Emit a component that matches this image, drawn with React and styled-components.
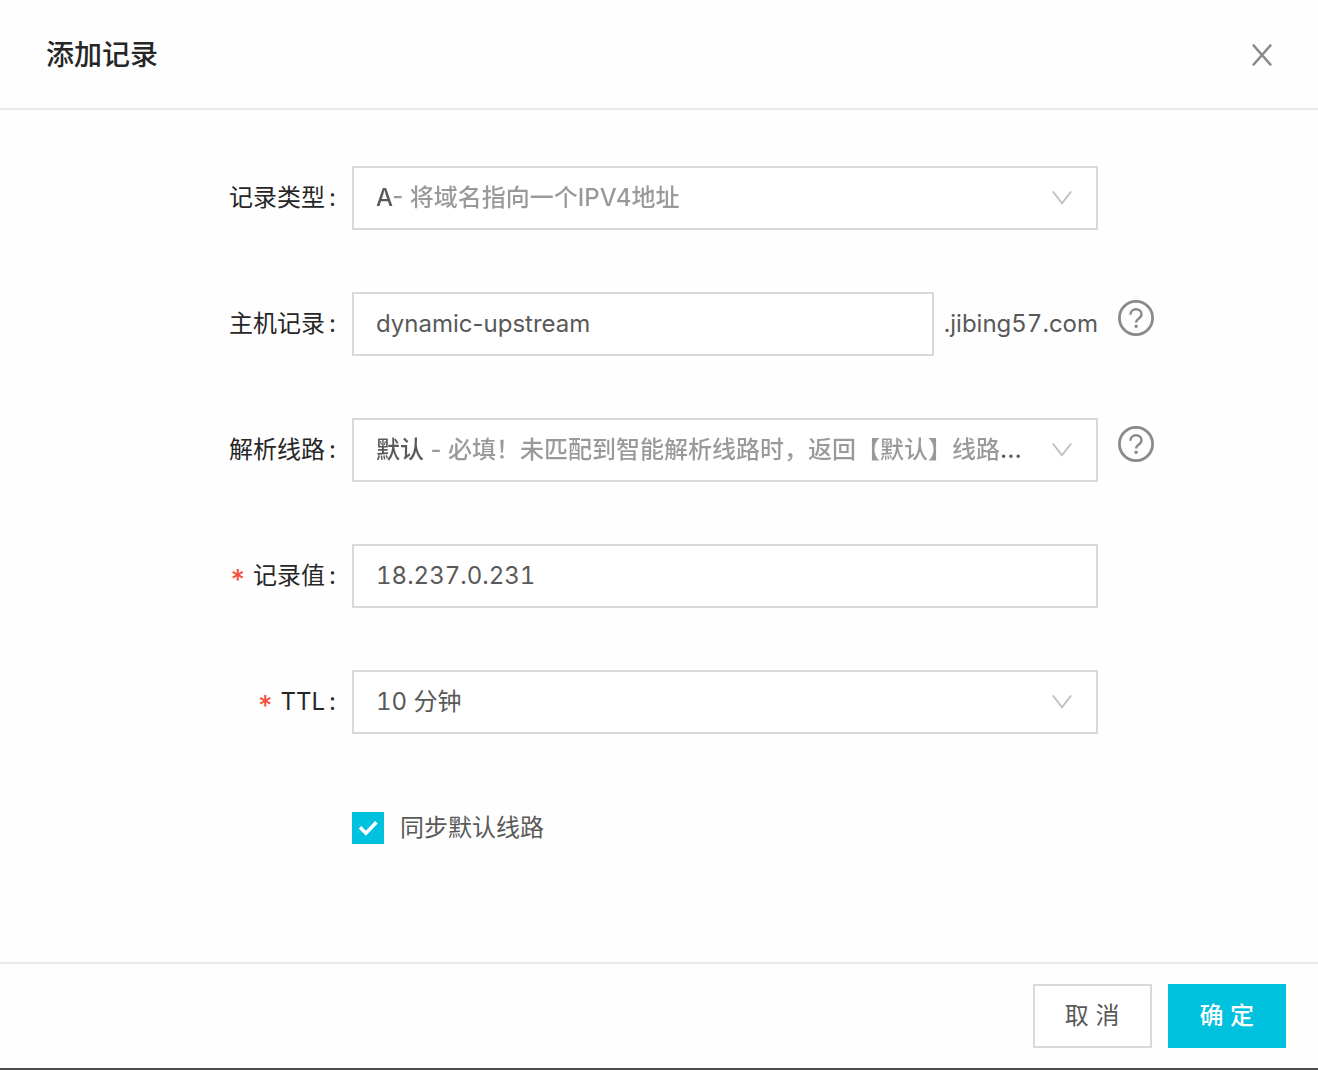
import React from "react";
import styled, { createGlobalStyle, css } from "styled-components";

const GlobalStyle = createGlobalStyle`
  *, *::before, *::after { box-sizing: border-box; }
  body {
    margin: 0;
    background: #fefefe;
    color: #595959;
    font-family: Inter, "Noto Sans CJK SC", sans-serif;
    font-size: 24px;
    line-height: 36px;
  }
  button, input, select { font: inherit; color: inherit; margin: 0; }
`;

const Dialog = styled.section`
  display: flex;
  flex-direction: column;
  min-height: 100vh;
  background: #fefefe;
  border-bottom: 2px solid #4d4d4f;
`;

const Header = styled.header`
  display: flex;
  align-items: center;
  justify-content: space-between;
  padding: 33px 46px 31px;
  border-bottom: 2px solid #e8eaea;
`;

const Title = styled.h1`
  margin: 0;
  color: #262626;
  font-size: 28px;
  font-weight: 500;
  line-height: 44px;
`;

const CloseButton = styled.button`
  display: flex;
  padding: 0;
  border: 0;
  background: none;
  color: #8a8a8a;
  cursor: pointer;
`;

const Form = styled.form`
  display: flex;
  flex: 1;
  flex-direction: column;
`;

const Fields = styled.div`
  display: flex;
  flex: 1;
  flex-direction: column;
  gap: 62px;
  padding: 56px 0 102px;
`;

const Row = styled.div`
  display: grid;
  grid-template-columns: 336px minmax(0, 1fr) 200px;
  column-gap: 16px;
  min-height: 64px;
`;

const Label = styled.label`
  display: flex;
  align-items: center;
  justify-content: flex-end;
  color: #262626;
`;

const Required = styled.span`
  margin-right: 8px;
  padding-top: 8px;
  color: #f5503f;
  font-size: 28px;
  font-weight: 500;
`;

const Colon = styled.span`
  margin-left: 4px;
`;

const Control = styled.div`
  grid-column: 2;
  display: flex;
  align-items: center;
  gap: 10px;
  margin-right: 4px;
`;

const frame = css`
  flex: 1;
  min-width: 0;
  height: 64px;
  border: 2px solid #d9d9d9;
  background: #fff;
`;

const TextInput = styled.input`
  ${frame}
  padding: 0 22px 2px;
  border-radius: 0;
  outline: none;
  font-variant-numeric: ${({ $numeric }) => ($numeric ? "tabular-nums" : "normal")};
`;

const Suffix = styled.span`
  font-variant-numeric: tabular-nums;
`;

const SelectFrame = styled.div`
  ${frame}
  display: grid;
  grid-template-columns: minmax(0, 1fr) 60px;
  align-items: center;
`;

const NativeSelect = styled.select`
  grid-area: 1 / 1 / 2 / 3;
  width: 100%;
  height: 60px;
  padding: 0 70px 0 22px;
  border: 0;
  border-radius: 0;
  outline: none;
  appearance: none;
  background: none;
  text-overflow: ellipsis;
  font-variant-numeric: tabular-nums;
  cursor: pointer;
  ${({ $lead }) =>
    $lead &&
    css`
      font-variant-numeric: normal;
      font-weight: 500;
      color: transparent;
      background: linear-gradient(
        to right,
        #595959 ${$lead}px,
        #999 ${$lead}px,
        #999 calc(100% - 95px),
        #595959 calc(100% - 95px)
      );
      background-clip: text;
      -webkit-background-clip: text;
      option { color: #595959; }
    `}
`;

const Chevron = styled.svg`
  grid-area: 1 / 2;
  margin-left: 16px;
  pointer-events: none;
`;

const HelpButton = styled.button`
  align-self: start;
  justify-self: start;
  display: flex;
  margin-top: 8px;
  padding: 0;
  border: 0;
  background: none;
  color: #8a8a8a;
  cursor: pointer;
`;

const CheckLabel = styled.label`
  display: flex;
  align-items: center;
  gap: 16px;
  cursor: pointer;
`;

const CheckSlot = styled.span`
  display: grid;
  place-items: center;
  & > * { grid-area: 1 / 1; }
`;

const Checkbox = styled.input`
  width: 32px;
  height: 32px;
  margin: 0;
  appearance: none;
  border: 2px solid #d9d9d9;
  background: #fff;
  &:checked { border-color: #00c1de; background: #00c1de; }
`;

const Tick = styled.svg`
  pointer-events: none;
`;

const Footer = styled.footer`
  display: flex;
  justify-content: flex-end;
  gap: 16px;
  padding: 20px 32px;
  border-top: 2px solid #e8eaea;
`;

const Button = styled.button`
  height: 64px;
  padding: 0 30px;
  border: 2px solid ${({ $primary }) => ($primary ? "#00c1de" : "#d9d9d9")};
  background: ${({ $primary }) => ($primary ? "#00c1de" : "#fff")};
  color: ${({ $primary }) => ($primary ? "#fff" : "#595959")};
  font-weight: ${({ $primary }) => ($primary ? 500 : 400)};
  cursor: pointer;
`;

function Field({ id, label, required, help, children }) {
  return (
    <Row>
      <Label htmlFor={id}>
        {required && <Required>*</Required>}
        {label}
        <Colon>:</Colon>
      </Label>
      <Control>{children}</Control>
      {help && (
        <HelpButton type="button" aria-label="帮助">
          <svg width="36" height="36" viewBox="0 0 36 36" fill="none" stroke="currentColor">
            <circle cx="18" cy="18" r="16.6" strokeWidth="2.8" />
            <path d="M12.4 14.8c0-3.3 2.4-5.5 5.6-5.5s5.5 2 5.5 4.9c0 2.3-1.4 3.4-3 4.5-1.7 1.1-2.4 1.9-2.4 3.9" strokeWidth="2.4" />
            <circle cx="18.1" cy="26.3" r="1.7" fill="currentColor" stroke="none" />
          </svg>
        </HelpButton>
      )}
    </Row>
  );
}

function Select({ id, text, lead }) {
  return (
    <SelectFrame>
      <NativeSelect id={id} $lead={lead}>
        <option>{text}</option>
      </NativeSelect>
      <Chevron width="20" height="14" viewBox="0 0 20 14" fill="none" stroke="#bfbfbf" strokeWidth="1.8">
        <path d="M.8.5 10 12.4 19.2.5" />
      </Chevron>
    </SelectFrame>
  );
}

export default function App() {
  return (
    <>
      <GlobalStyle />
      <Dialog role="dialog" aria-labelledby="dialog-title">
        <Header>
          <Title id="dialog-title">添加记录</Title>
          <CloseButton type="button" aria-label="关闭">
            <svg width="20" height="22" viewBox="0 0 20 22" fill="none" stroke="currentColor" strokeWidth="2.4">
              <path d="M.9.6 19.1 21.4M19.1.6.9 21.4" />
            </svg>
          </CloseButton>
        </Header>
        <Form onSubmit={(event) => event.preventDefault()}>
          <Fields>
            <Field id="type" label="记录类型">
              <Select id="type" text="A- 将域名指向一个IPV4地址" lead={39} />
            </Field>
            <Field id="host" label="主机记录" help>
              <TextInput id="host" defaultValue="dynamic-upstream" />
              <Suffix>.jibing57.com</Suffix>
            </Field>
            <Field id="line" label="解析线路" help>
              <Select id="line" text="默认 - 必填！未匹配到智能解析线路时，返回【默认】线路设置结果" lead={72} />
            </Field>
            <Field id="value" label="记录值" required>
              <TextInput id="value" defaultValue="18.237.0.231" $numeric />
            </Field>
            <Field id="ttl" label="TTL" required>
              <Select id="ttl" text="10 分钟" />
            </Field>
            <Row>
              <Control>
                <CheckLabel>
                  <CheckSlot>
                    <Checkbox type="checkbox" defaultChecked />
                    <Tick width="20" height="16" viewBox="0 0 20 16" fill="none" stroke="#fff" strokeWidth="3.6">
                      <path d="m2 7.2 5.9 6L18.4 2.2" />
                    </Tick>
                  </CheckSlot>
                  同步默认线路
                </CheckLabel>
              </Control>
            </Row>
          </Fields>
          <Footer>
            <Button type="button">取 消</Button>
            <Button type="submit" $primary>确 定</Button>
          </Footer>
        </Form>
      </Dialog>
    </>
  );
}
